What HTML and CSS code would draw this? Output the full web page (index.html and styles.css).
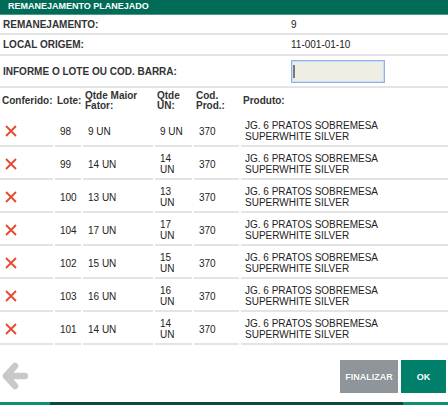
FILE: index.html
```html
<!DOCTYPE html>
<html lang="pt">
<head>
<meta charset="utf-8">
<title>Remanejamento Planejado</title>
<link rel="stylesheet" href="styles.css">
</head>
<body>
<div class="page">
  <div class="titlebar">REMANEJAMENTO PLANEJADO</div>

  <div class="info">
    <div class="info-row row-a"><span class="lbl">REMANEJAMENTO:</span><span class="val">9</span></div>
    <div class="info-row row-b"><span class="lbl">LOCAL ORIGEM:</span><span class="val">11-001-01-10</span></div>
    <div class="info-row row-c">
      <span class="lbl">INFORME O LOTE OU COD. BARRA:</span>
      <span class="field"><input class="code-input" type="text" aria-label="Lote ou código de barras"><span class="caret"></span></span>
    </div>
  </div>

  <div class="grid">
    <div class="grow head">
      <div class="cell">Conferido:</div>
      <div class="cell">Lote:</div>
      <div class="cell">Qtde Maior Fator:</div>
      <div class="cell">Qtde UN:</div>
      <div class="cell">Cod. Prod.:</div>
      <div class="cell">Produto:</div>
    </div>

    <div class="grow">
      <div class="cell"><svg class="xicon" viewBox="0 0 12 12"><path d="M1 1L11 11M11 1L1 11"/></svg></div>
      <div class="cell">98</div><div class="cell">9 UN</div><div class="cell un">9 UN</div><div class="cell">370</div>
      <div class="cell prod">JG. 6 PRATOS SOBREMESA SUPERWHITE SILVER</div>
    </div>
    <div class="grow">
      <div class="cell"><svg class="xicon" viewBox="0 0 12 12"><path d="M1 1L11 11M11 1L1 11"/></svg></div>
      <div class="cell">99</div><div class="cell">14 UN</div><div class="cell un">14 UN</div><div class="cell">370</div>
      <div class="cell prod">JG. 6 PRATOS SOBREMESA SUPERWHITE SILVER</div>
    </div>
    <div class="grow">
      <div class="cell"><svg class="xicon" viewBox="0 0 12 12"><path d="M1 1L11 11M11 1L1 11"/></svg></div>
      <div class="cell">100</div><div class="cell">13 UN</div><div class="cell un">13 UN</div><div class="cell">370</div>
      <div class="cell prod">JG. 6 PRATOS SOBREMESA SUPERWHITE SILVER</div>
    </div>
    <div class="grow">
      <div class="cell"><svg class="xicon" viewBox="0 0 12 12"><path d="M1 1L11 11M11 1L1 11"/></svg></div>
      <div class="cell">104</div><div class="cell">17 UN</div><div class="cell un">17 UN</div><div class="cell">370</div>
      <div class="cell prod">JG. 6 PRATOS SOBREMESA SUPERWHITE SILVER</div>
    </div>
    <div class="grow">
      <div class="cell"><svg class="xicon" viewBox="0 0 12 12"><path d="M1 1L11 11M11 1L1 11"/></svg></div>
      <div class="cell">102</div><div class="cell">15 UN</div><div class="cell un">15 UN</div><div class="cell">370</div>
      <div class="cell prod">JG. 6 PRATOS SOBREMESA SUPERWHITE SILVER</div>
    </div>
    <div class="grow">
      <div class="cell"><svg class="xicon" viewBox="0 0 12 12"><path d="M1 1L11 11M11 1L1 11"/></svg></div>
      <div class="cell">103</div><div class="cell">16 UN</div><div class="cell un">16 UN</div><div class="cell">370</div>
      <div class="cell prod">JG. 6 PRATOS SOBREMESA SUPERWHITE SILVER</div>
    </div>
    <div class="grow">
      <div class="cell"><svg class="xicon" viewBox="0 0 12 12"><path d="M1 1L11 11M11 1L1 11"/></svg></div>
      <div class="cell">101</div><div class="cell">14 UN</div><div class="cell un">14 UN</div><div class="cell">370</div>
      <div class="cell prod">JG. 6 PRATOS SOBREMESA SUPERWHITE SILVER</div>
    </div>
  </div>

  <div class="footer">
    <svg class="back" viewBox="0 0 26 28" aria-label="Voltar"><path d="M13 4L4 14L13 24M4 14H23"/></svg>
    <div class="actions">
      <button class="btn btn-gray">FINALIZAR</button>
      <button class="btn btn-green">OK</button>
    </div>
  </div>
  <div class="strip"></div>
</div>
</body>
</html>
```

FILE: styles.css
```css
* { box-sizing: border-box; }

html, body {
  margin: 0;
  padding: 0;
  background: #fff;
}

body {
  font-family: "Liberation Sans", Arial, sans-serif;
  font-size: 10px;
  color: #333;
}

.page {
  width: 448px;
  height: 405px;
  display: flex;
  flex-direction: column;
  overflow: hidden;
}

.titlebar {
  height: 15px;
  background: #006b57;
  border-bottom: 1px solid #4a9a8a;
  color: #fff;
  font-weight: bold;
  font-size: 9px;
  line-height: 13px;
  padding-left: 8px;
}

.info-row {
  display: grid;
  grid-template-columns: 291px 1fr;
  align-items: center;
  border-bottom: 2px solid #e4e4e4;
}

.row-a { height: 20px; }
.row-b { height: 21px; }
.row-c { height: 32px; }

.lbl {
  font-weight: bold;
  padding-left: 3px;
  color: #333;
}

.val {
  color: #222;
}

.field {
  position: relative;
  display: block;
  width: 94px;
  height: 23px;
}

.code-input {
  display: block;
  width: 94px;
  height: 23px;
  margin: 0;
  padding: 0 4px;
  background: #efeee3;
  border: 1px solid #8fb2ea;
  box-shadow: 0 0 0 1px #c9dbf7 inset;
  outline: none;
  font-family: inherit;
  font-size: 10px;
}

.caret {
  position: absolute;
  left: 2px;
  top: 5px;
  width: 2px;
  height: 13px;
  background: #7b7b7b;
}

.grid {
  display: flex;
  flex-direction: column;
}

.grow {
  display: grid;
  grid-template-columns: 53px 26px 70px 37px 45px 1fr;
  column-gap: 2px;
  height: 33px;
}

.grow .cell {
  display: flex;
  align-items: center;
  padding: 5px 4px 2px 5px;
  line-height: 11px;
  border-bottom: 2px solid #e4e4e4;
  color: #222;
}

.grow .cell.un {
  padding-right: 6px;
}

.grow .cell.prod {
  padding-left: 4px;
  padding-right: 20px;
}

.grow.head {
  height: 26px;
}

.grow.head .cell {
  border-bottom: none;
  font-weight: bold;
  color: #333;
  line-height: 10px;
  padding: 3px 2px 3px 2px;
}

.xicon {
  width: 12px;
  height: 12px;
  fill: none;
  stroke: #e8472f;
  stroke-width: 1.8;
}

.footer {
  height: 57px;
  display: flex;
  justify-content: space-between;
  align-items: flex-start;
  padding: 15px 2px 0 2px;
}

.back {
  width: 26px;
  height: 28px;
  margin-top: 2px;
  fill: none;
  stroke: #c8c8c8;
  stroke-width: 6.5;
  stroke-linecap: round;
  stroke-linejoin: round;
}

.actions {
  display: flex;
  gap: 3px;
}

.btn {
  height: 33px;
  border: none;
  margin: 0;
  padding: 0;
  color: #fff;
  font-family: "Liberation Sans", Arial, sans-serif;
  font-weight: bold;
  font-size: 9px;
  cursor: pointer;
}

.btn-gray {
  width: 58px;
  background: #8e969b;
  text-shadow: 0 0 1px rgba(0, 0, 0, 0.25);
}

.btn-green {
  width: 45px;
  background: #00806b;
}

.strip {
  height: 3px;
  background: linear-gradient(to right, #0f8f78 0, #0f8f78 50px, #0b4a3e 50px, #0b4a3e 403px, #0f8f78 403px);
}
```
